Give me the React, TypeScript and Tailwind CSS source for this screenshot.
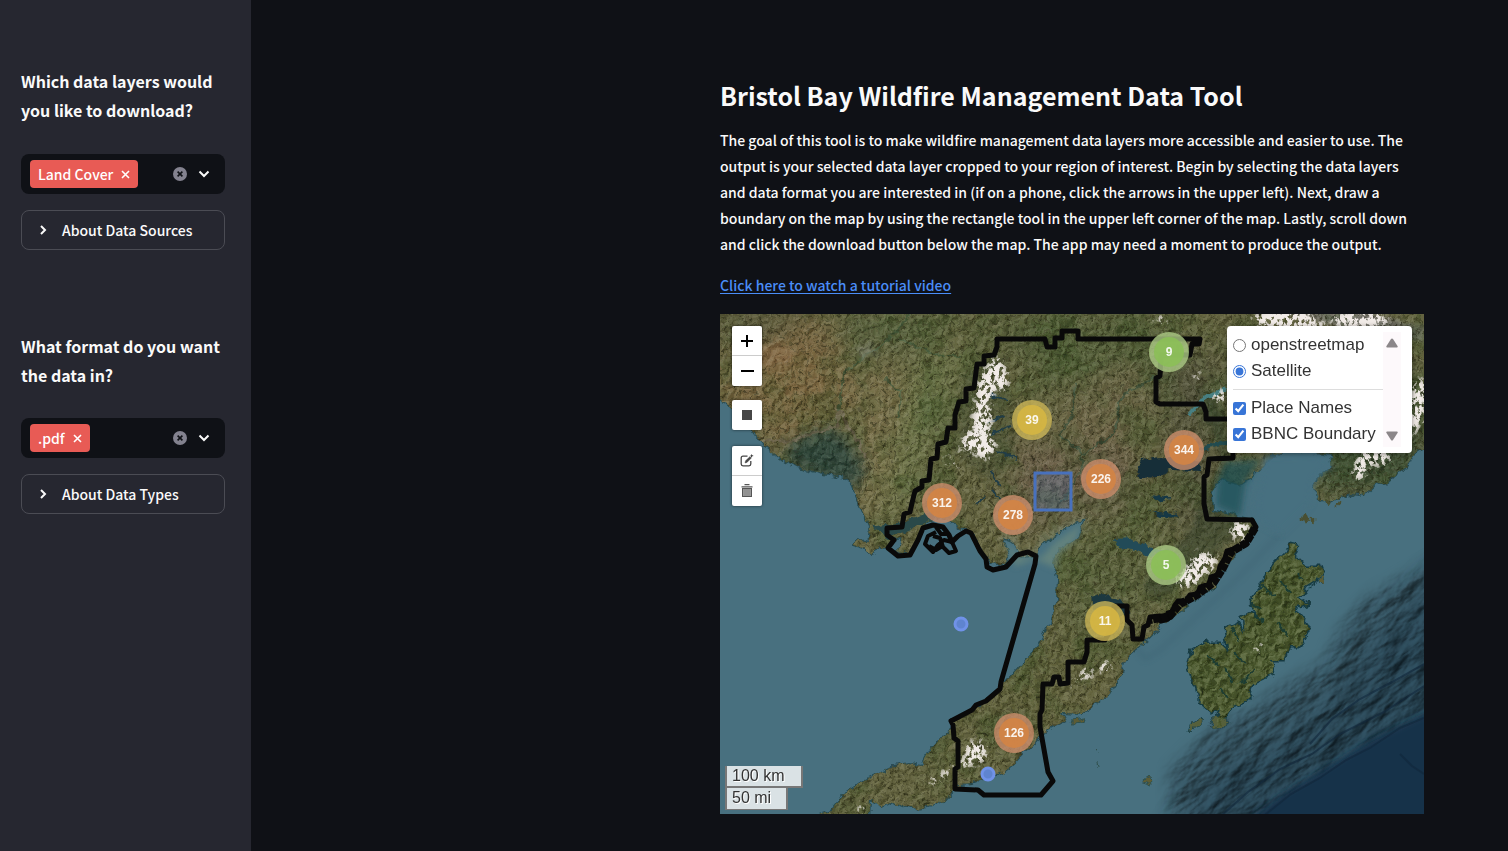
import React, { useState } from "react";

const BOUNDARY =
  "M277 25H325L327 33H335V24H342V17H358V25H480L479 30H472L470 41H441L440 62L436 64V88L440 90H483L486 98V105H513V144L489 145L487 161L484 163V190L487 205L532 206L536 213L530 222L525 231L514 235L507 237L505 244L500 252L498 261L491 263L489 270L480 273L478 280L470 281L466 287L458 287L455 291L452 298L448 299V305L441 307L440 302L430 303L428 311L424 313L422 325H413L412 311L407 306V292H394V310L385 326H367V338L364 348H348V369L340 370L339 363H334L332 370H323L322 396L320 400V413L328 458L333 467L321 481H264L258 476L235 475V455L238 453V427L234 424L233 411L231 407L252 396L256 391L266 387L280 375L281 368L315 250L316 242L308 238L297 241L286 253L273 256L267 253L266 245L260 237L251 219L246 217L238 222L232 228L229 221L223 213L213 211L203 214L198 226L190 241L178 242L168 234L174 226L167 221V214L182 213L184 200L190 198L192 189L195 177L202 173V167L209 166L211 145L217 144L218 130L226 128L228 114H235V101L239 88L246 87V75L254 74L257 50H264V42L274 41L277 33Z";

const LAND =
  "M-10 -10H714V126L696 138L684 156L676 160L667 168L655 171L648 178L640 181L630 180L618 184L607 189L597 183L594 172L600 162L612 155L610 141L580 137L560 139L545 148L530 165L518 170L500 166L492 178L493 196L534 206L534 217L526 229L514 241L505 254L494 272L470 289L445 308L430 323L411 339L404 351L399 365L390 378L375 390L360 400L342 399L346 407L328 416L316 427L301 442L291 452L281 459L263 465L251 470L239 471L225 485L208 492L191 495L173 488L161 494L151 485L150 510H72L111 497L124 480L144 466L173 453L188 450L202 452L211 435L221 424L233 415L232 407L253 395L266 387L280 374L300 352L319 331L331 308L337 285L338 263L332 246L340 236L358 224L365 204L351 211L331 222L315 240L300 243L292 227L282 223L289 240L284 252L271 249L262 237L251 219L240 214L230 206L216 202L203 211L196 232L186 240L178 236L182 224L173 226L164 232L150 239L145 234L132 230L135 227L147 228L149 214L141 195L133 174L125 164L100 159L80 154L64 147L45 132L30 113L14 96L-10 76Z";

const KODIAK =
  "M553 250L567 236L570 229L579 231L575 243L588 252L600 252L603 260L596 267L586 273L580 285L588 290L576 293L579 300L587 310L587 320L579 333L568 333L563 347L551 347L554 360L544 364L533 369L530 381L520 391L510 394L501 410L496 411L501 395L492 399L479 387L476 373L470 361L467 352L472 337L485 329L503 329L509 340L505 314L517 309L525 320L523 303L530 299L539 303L529 287L542 271L547 259Z";

const SNOW = [
  [268, 70, 12, 26, 20], [262, 104, 12, 22, 0], [264, 132, 14, 15, -20], [247, 128, 7, 14, 10], [280, 60, 9, 20, -15],
  [236, 147, 4, 9, 0], [226, 148, 3, 7, 0], [565, 5, 34, 13, 0], [585, 13, 24, 10, 0], [640, 6, 30, 12, 0], [697, 92, 11, 30, 10],
  [520, 216, 11, 12, 30], [484, 248, 15, 12, 0], [470, 262, 17, 12, -30], [642, 150, 9, 20, 15], [660, 143, 12, 11, 0],
  [384, 353, 9, 7, -20], [366, 360, 7, 8, 0], [356, 369, 5, 6, 0], [256, 438, 13, 13, 10], [248, 447, 11, 7, -30],
  [227, 458, 10, 5, -40], [215, 466, 8, 5, -30], [142, 495, 6, 6, 0], [440, 6, 9, 5, 0], [538, 334, 11, 4, -50], [477, 63, 4, 8, 0],
  [500, 82, 10, 8, 0],
];

const CLUSTERS = [
  { n: 9, x: 449, y: 38, size: "s" },
  { n: 39, x: 312, y: 106, size: "m" },
  { n: 344, x: 464, y: 136, size: "l" },
  { n: 226, x: 381, y: 165, size: "l" },
  { n: 278, x: 293, y: 201, size: "l" },
  { n: 312, x: 222, y: 189, size: "l" },
  { n: 5, x: 446, y: 251, size: "s" },
  { n: 11, x: 385, y: 307, size: "m" },
  { n: 126, x: 294, y: 419, size: "l" },
];

const OUTER: Record<string, string> = {
  s: "bg-[#adcb86]/80",
  m: "bg-[#c9b457]/80",
  l: "bg-[#cb8d6c]/80",
};
const INNER: Record<string, string> = {
  s: "bg-[#8bbf58]/90",
  m: "bg-[#d5b643]/90",
  l: "bg-[#d38445]/90",
};

function SatelliteImage() {
  return (
    <svg
      className="absolute inset-0 h-full w-full"
      viewBox="0 0 704 500"
      preserveAspectRatio="xMinYMin slice"
      aria-hidden="true"
    >
      <defs>
        <filter id="coast" x="-5%" y="-5%" width="110%" height="110%">
          <feTurbulence type="fractalNoise" baseFrequency="0.11" numOctaves="3" seed="4" />
          <feDisplacementMap in="SourceGraphic" scale="9" xChannelSelector="R" yChannelSelector="G" />
        </filter>
        <filter id="soft" x="-40%" y="-40%" width="180%" height="180%">
          <feGaussianBlur stdDeviation="14" />
        </filter>
        <filter id="soft3" x="-40%" y="-40%" width="180%" height="180%">
          <feGaussianBlur stdDeviation="3" />
        </filter>
        <filter id="soft7" x="-40%" y="-40%" width="180%" height="180%">
          <feGaussianBlur stdDeviation="7" />
        </filter>
        <filter id="relief" x="0" y="0" width="100%" height="100%" colorInterpolationFilters="sRGB">
          <feTurbulence type="fractalNoise" baseFrequency="0.15 0.12" numOctaves="4" seed="11" />
          <feColorMatrix values="0 0 0 0 0 0 0 0 0 0 0 0 0 0 0 1 0 0 0 0" />
          <feDiffuseLighting surfaceScale="2.2" lightingColor="#ffffff" diffuseConstant="0.8">
            <feDistantLight azimuth="225" elevation="42" />
          </feDiffuseLighting>
        </filter>
        <filter id="mottle" x="0" y="0" width="100%" height="100%" colorInterpolationFilters="sRGB">
          <feTurbulence type="fractalNoise" baseFrequency="0.025" numOctaves="5" seed="23" />
          <feColorMatrix values="0 0 0 0 0.22 0 0 0 0 0.31 0 0 0 0 0.14 4 0 0 0 -1.8" />
        </filter>
        <filter id="grain" x="0" y="0" width="100%" height="100%" colorInterpolationFilters="sRGB">
          <feTurbulence type="fractalNoise" baseFrequency="0.35" numOctaves="2" seed="31" />
          <feColorMatrix values="0 0 0 0 0.16 0 0 0 0 0.16 0 0 0 0 0.08 5 0 0 0 -2.6" />
        </filter>
        <filter id="seabed" x="0" y="0" width="100%" height="100%" colorInterpolationFilters="sRGB">
          <feTurbulence type="fractalNoise" baseFrequency="0.03 0.07" numOctaves="5" seed="8" />
          <feColorMatrix values="0 0 0 0 0 0 0 0 0 0 0 0 0 0 0 1 0 0 0 0" />
          <feDiffuseLighting surfaceScale="5" lightingColor="#55839a" diffuseConstant="0.7">
            <feDistantLight azimuth="240" elevation="42" />
          </feDiffuseLighting>
        </filter>
        <filter id="snow" x="0" y="0" width="704" height="500" filterUnits="userSpaceOnUse" colorInterpolationFilters="sRGB">
          <feGaussianBlur in="SourceAlpha" stdDeviation="3.5" result="a" />
          <feTurbulence type="fractalNoise" baseFrequency="0.24 0.18" numOctaves="4" seed="5" />
          <feColorMatrix values="0 0 0 0 0 0 0 0 0 0 0 0 0 0 0 1 0 0 0 0" result="n" />
          <feComposite in="a" in2="n" operator="arithmetic" k1="0" k2="0.5" k3="1.2" k4="-0.1" />
          <feComponentTransfer>
            <feFuncA type="linear" slope="6" intercept="-5" />
          </feComponentTransfer>
          <feComposite in2="a" operator="in" result="m" />
          <feFlood floodColor="#f1ebe7" />
          <feComposite in2="m" operator="in" />
        </filter>
        <clipPath id="landClip">
          <path d={LAND} />
        </clipPath>
        <clipPath id="kodiakClip">
          <path d={KODIAK} />
        </clipPath>
        <mask id="ridgeMask">
          <path
            d="M724 240L680 265L645 285L620 315L606 345L592 355L562 372L535 392L500 408L450 455V520H525L600 462L645 430L724 388Z"
            fill="#fff"
            filter="url(#soft7)"
          />
        </mask>
      </defs>

      <rect width="704" height="500" fill="#48707f" />
      <path d="M730 250L655 325L605 390L550 430L490 462L450 530H730Z" fill="#25485b" filter="url(#soft)" />
      <g mask="url(#ridgeMask)" opacity="0.6">
        <g transform="rotate(-34 560 400)">
          <rect x="330" y="220" width="520" height="360" filter="url(#seabed)" />
        </g>
      </g>
      <path d="M524 510L560 482L600 458L650 427L714 396V510Z" fill="#19324a" filter="url(#soft3)" />
      <path d="M540 505L571 480L600 464L626 446L650 434L680 414L704 404M500 503L528 478L560 455L592 440L620 420L664 398L704 372M590 430L612 405L640 385L672 368L704 350" fill="none" stroke="#10263a" strokeWidth="2" opacity="0.6" />
      <path d="M680 440L692 452L704 460" fill="none" stroke="#10263a" strokeWidth="2" opacity="0.6" />
      <path d="M400 310L425 345L440 336L520 262L560 220" fill="none" stroke="#35586a" strokeWidth="3" opacity="0.4" filter="url(#soft3)" />

      <g filter="url(#coast)">
        <path d={LAND} fill="#5a5a3a" stroke="#284a50" strokeWidth="2" />
      </g>
      <g filter="url(#coast)">
        <g clipPath="url(#landClip)">
          <rect x="-10" y="-10" width="724" height="520" fill="#63633f" />
          <g filter="url(#soft)">
            <path d="M0 0H110L130 60L118 110L60 130L0 90Z" fill="#7b6742" />
            <path d="M0 0H100L60 25L0 45Z" fill="#5c5a3d" />
            <path d="M110 0H230L190 40L110 35Z" fill="#5b6340" />
            <path d="M120 45L190 60L170 220L140 200Z" fill="#786e49" />
            <path d="M190 50L250 30L220 120L190 190L155 220Z" fill="#677044" />
            <path d="M260 0H440V90L330 80Z" fill="#525d38" />
            <path d="M335 85L430 45L420 130L350 150Z" fill="#6d6646" />
            <path d="M290 130L410 130L430 200L370 210L290 215Z" fill="#6c6149" />
            <path d="M440 40L500 40L500 200L460 230Z" fill="#57563d" />
            <path d="M345 205L450 180L440 290L340 330Z" fill="#5a613a" />
            <path d="M300 350L400 300L320 410L240 460Z" fill="#5f613b" />
            <path d="M590 80L704 60V180H590Z" fill="#3e4d32" />
          </g>
          <path d="M520 -4H640L704 14V26H640L615 12L560 -1Z" fill="#77746c" filter="url(#soft3)" />
          <rect width="704" height="500" filter="url(#mottle)" opacity="0.36" />
          <rect width="704" height="500" filter="url(#grain)" opacity="0.5" />
          <ellipse cx="54" cy="42" rx="20" ry="13" fill="#8a6d48" opacity="0.65" filter="url(#soft3)" />
          <path d="M70 127L112 113L125 123L138 140L147 152L133 178L100 165L65 148Z" fill="#203d38" opacity="0.75" filter="url(#soft7)" />
          <path d="M40 127L72 127L100 118L118 110L118 96L132 118L145 144" fill="none" stroke="#6e6551" strokeWidth="3" opacity="0.7" />
          <path d="M118 96L124 58L140 45L165 30L190 0M180 25L215 40L240 42M165 65L180 78L178 105" fill="none" stroke="#405638" strokeWidth="2" opacity="0.75" />
          <path d="M356 70L352 100L340 120L362 140L385 125L397 115L398 88L410 76L440 62M362 140L360 160L340 190" fill="none" stroke="#384d38" strokeWidth="2" opacity="0.75" />
          <path d="M135 32L152 30L156 40L142 45Z" fill="#808071" opacity="0.6" filter="url(#soft3)" />
          <path d="M365 204L351 211L331 222L315 240L300 243L292 227L282 223" fill="none" stroke="#87917b" strokeWidth="8" opacity="0.5" filter="url(#soft3)" />
          <rect width="704" height="500" filter="url(#relief)" opacity="0.7" className="mix-blend-soft-light" />
          <g filter="url(#soft3)" opacity="0.45">
            <path d="M475 70L505 150L470 215L420 275L440 285L520 220L500 90Z" fill="#2f3d2c" />
            <path d="M240 60L285 40L295 140L270 170L235 140Z" fill="#35442f" opacity="0.6" />
          </g>
          <path d="M416 160L422 146L440 143L482 147L480 157L450 156L437 163L420 164Z" fill="#142d38" />
          <path d="M432 183L440 180L450 184L440 187ZM430 197L440 198L455 200L458 203L440 201Z" fill="#193844" />
          <path d="M394 225L410 224L425 232L448 237L430 242L412 235L398 233Z" fill="#244c58" />
          <path d="M372 283L382 280L402 287L410 300L395 306L375 300Z" fill="#1b3941" />
          <path d="M267 80L286 86M268 108L286 103M272 119L292 112M278 137L296 145M272 157L281 172M255 190L266 183M272 174L280 187" fill="none" stroke="#203d46" strokeWidth="2" />
          <path d="M467 102L477 90L490 82L507 74" fill="none" stroke="#467f82" strokeWidth="4" />
          <path d="M460 140L492 132L510 128" fill="none" stroke="#244b50" strokeWidth="4" />
          <path d="M150 213L185 208L210 198L216 203L190 216L168 224Z" fill="#29494a" />
          <path d="M215 216L232 211L252 220L262 240L240 240Z" fill="#446c79" />
        </g>
      </g>

      <g filter="url(#soft3)">
        <path d="M285 226L300 243L322 243L335 228L354 215L362 208L356 226L337 242L338 255L315 245L295 252Z" fill="#69877d" opacity="0.8" />
        <path d="M505 148L542 145L525 170L520 203L496 192L498 165Z" fill="#1e5056" opacity="0.7" />
        <path d="M545 142L600 141L612 152L594 165L590 190L560 220L542 210L535 190L540 168Z" fill="#476f80" />
      </g>

      <g filter="url(#coast)">
        <path d={KODIAK} fill="#46512d" stroke="#173b42" strokeWidth="3" />
        <path d="M494 404L506 403L509 409L498 413L488 413ZM468 420L472 408L481 403L485 407L474 414Z" fill="#57603a" stroke="#23454a" />
        <path d="M352 407L366 405L367 408L354 410ZM424 465L431 461L432 472L423 469ZM376 435L378 441M379 448L380 454M601 262L604 264L603 272L599 268Z" fill="#5b5b36" stroke="#30504d" />
        <path d="M578 205L585 202L587 207M590 205L596 208M603 186L610 190M617 189L620 190" fill="none" stroke="#4a5030" strokeWidth="3" />
        <g clipPath="url(#kodiakClip)">
          <rect x="460" y="220" width="150" height="200" fill="#48552c" />
          <rect x="460" y="220" width="150" height="200" filter="url(#relief)" className="mix-blend-soft-light" />
          <path d="M511 313L519 328M530 299L544 307M542 271L556 283M487 340L500 352M505 355L513 368M529 288L541 296M560 265L570 277M520 370L534 357M515 340L526 350M500 375L508 385M575 260L584 266M558 310L568 322" fill="none" stroke="#1e3c32" strokeWidth="2" />
        </g>
      </g>

      <g filter="url(#snow)">
        {SNOW.map(([x, y, rx, ry, r], i) => (
          <ellipse key={i} cx={x} cy={y} rx={rx} ry={ry} transform={`rotate(${r} ${x} ${y})`} />
        ))}
      </g>
    </svg>
  );
}

function BoundaryLayer() {
  return (
    <svg
      className="absolute inset-0 h-full w-full"
      viewBox="0 0 704 500"
      preserveAspectRatio="xMinYMin slice"
      aria-hidden="true"
    >
      <g fill="none" stroke="#090909" strokeWidth="5" strokeLinejoin="round">
        <path d={BOUNDARY} />
        <path d="M216 218L208 222L205 230L213 238L218 231L224 226L232 228L236 237L229 239L223 233L220 224L213 222M209 232L216 236L224 231M216 213L221 220L228 220" strokeWidth="4" />
        <path d="M535 214L526 229L511 238L503 254L494 268L477 281L460 290L450 302L430 306" strokeWidth="8" strokeDasharray="7 1" />
      </g>
      <rect x="315" y="159" width="36" height="37" fill="#5076c8" fillOpacity="0.22" stroke="#4871bd" strokeWidth="3" />
      {[[241, 310], [268, 460]].map(([x, y]) => (
        <circle key={x} cx={x} cy={y} r="6" fill="#5f84cf" stroke="#7092e8" strokeWidth="3" />
      ))}
    </svg>
  );
}

const barClass = "overflow-hidden rounded-[2px] bg-white shadow-[0_0_3px_rgba(0,0,0,0.6)]";
const barButton = "flex h-[30px] w-[30px] items-center justify-center text-[#000]";

function MapControls() {
  return (
    <div className="absolute top-3 left-3 flex flex-col">
      <div className={barClass}>
        <button type="button" aria-label="Zoom in" className={`${barButton} border-b border-[#ccc]`}>
          <svg width="14" height="14" viewBox="0 0 14 14" stroke="currentColor" strokeWidth="2">
            <path d="M7 1V13M1 7H13" />
          </svg>
        </button>
        <button type="button" aria-label="Zoom out" className={barButton}>
          <svg width="14" height="14" viewBox="0 0 14 14" stroke="currentColor" strokeWidth="2">
            <path d="M1 7H14" />
          </svg>
        </button>
      </div>
      <div className={`${barClass} mt-[14px]`}>
        <button type="button" aria-label="Draw a rectangle" className={barButton}>
          <span className="h-[10px] w-[10px] bg-[#464646]" />
        </button>
      </div>
      <div className={`${barClass} mt-4`}>
        <button type="button" aria-label="Edit layers" className={`${barButton} border-b border-[#ccc]`}>
          <svg width="14" height="14" viewBox="0 0 14 14" fill="none" stroke="#464646">
            <path d="M7.5 2.2H3Q1.2 2.2 1.2 4V10Q1.2 11.8 3 11.8H9Q10.8 11.8 10.8 10V7" strokeWidth="1.3" />
            <path d="M5 9L5.5 6.8L10 2.6L11.4 4L7 8.4Z" fill="#464646" strokeWidth="0.4" />
            <path d="M11.5 0.5V3.3M10.5 1.8H13.2" strokeWidth="1.1" />
          </svg>
        </button>
        <button type="button" aria-label="Delete layers" className={barButton}>
          <svg width="12" height="14" viewBox="0 0 12 14" fill="none" stroke="#555">
            <path d="M3.5 0.7H8.5M0.5 2.8H11.5" strokeWidth="1.3" />
            <rect x="1.5" y="4.5" width="9" height="8" fill="#999" />
            <path d="M4 5V12M6 5V12M8 5V12" stroke="#888" strokeWidth="0.7" />
          </svg>
        </button>
      </div>
    </div>
  );
}

function LayersPanel() {
  const [base, setBase] = useState("Satellite");
  const row = "flex h-[26px] items-center gap-[5px]";
  return (
    <div className="absolute top-3 right-3 flex rounded-[4px] bg-white py-[6px] pr-[11px] pl-[6px] text-[17px] text-[#333] shadow-[0_1px_5px_rgba(0,0,0,0.4)]">
      <div className="w-[150px] whitespace-nowrap">
        {["openstreetmap", "Satellite"].map((name) => (
          <label key={name} className={row}>
            <input
              type="radio"
              name="base"
              checked={base === name}
              onChange={() => setBase(name)}
              className="m-0 h-[13px] w-[13px] accent-[#3875d7]"
            />
            {name}
          </label>
        ))}
        <div className="my-[5px] h-px bg-[#ddd]" />
        {["Place Names", "BBNC Boundary"].map((name) => (
          <label key={name} className={row}>
            <input type="checkbox" defaultChecked className="m-0 h-[13px] w-[13px] accent-[#3875d7]" />
            {name}
          </label>
        ))}
      </div>
      <div className="flex w-[18px] flex-col items-center justify-between bg-[#fdf9fb] py-[6px]">
        <svg width="12" height="10" viewBox="0 0 12 10" fill="#8b8789">
          <path d="M6 0.5Q6.6 0.5 7 1L11.5 8Q12.2 9.5 10.8 9.5H1.2Q-0.2 9.5 0.5 8L5 1Q5.4 0.5 6 0.5Z" />
        </svg>
        <svg width="12" height="10" viewBox="0 0 12 10" fill="#8b8789">
          <path d="M6 9.5Q6.6 9.5 7 9L11.5 2Q12.2 0.5 10.8 0.5H1.2Q-0.2 0.5 0.5 2L5 9Q5.4 9.5 6 9.5Z" />
        </svg>
      </div>
    </div>
  );
}

function WildfireMap() {
  return (
    <section
      aria-label="Map"
      className="relative h-[500px] w-full overflow-hidden bg-[#48707f] font-['Liberation_Sans',Arial,sans-serif] font-normal"
    >
      <SatelliteImage />
      <BoundaryLayer />
      {CLUSTERS.map((c) => (
        <button
          key={c.n}
          type="button"
          style={{ left: c.x, top: c.y }}
          className={`absolute flex h-10 w-10 -translate-x-1/2 -translate-y-1/2 items-center justify-center rounded-full ${OUTER[c.size]}`}
        >
          <span
            className={`flex h-[30px] w-[30px] items-center justify-center rounded-full text-[12px] font-bold text-white/90 ${INNER[c.size]}`}
          >
            {c.n}
          </span>
        </button>
      ))}
      <MapControls />
      <LayersPanel />
      <div className="absolute bottom-1 left-[5px] flex flex-col items-start text-[16px] leading-[20px] text-[#333] [text-shadow:1px_1px_#fff]">
        <div className="h-[22px] w-[78px] border-2 border-t-0 border-[#777] bg-white/80 pl-[5px]">100 km</div>
        <div className="h-[22px] w-[63px] border-x-2 border-b border-[#777] bg-white/80 pl-[5px]">50 mi</div>
      </div>
    </section>
  );
}

function MultiSelect({ id, value }: { id: string; value: string }) {
  return (
    <div className="flex h-10 items-center rounded-lg bg-[#0f1116] pr-[13px] pl-[9px]">
      <span className="flex h-7 shrink-0 items-center gap-2 rounded-[4px] bg-[#e85b55] px-2 text-[14px] text-white">
        {value}
        <button type="button" aria-label={`Remove ${value}`}>
          <svg width="9" height="9" viewBox="0 0 9 9" stroke="currentColor" strokeWidth="1.6">
            <path d="M1 1L8 8M8 1L1 8" />
          </svg>
        </button>
      </span>
      <input id={id} className="min-w-0 flex-1 bg-transparent outline-none" />
      <button type="button" aria-label="Clear all" className="mr-[9px]">
        <svg width="14" height="14" viewBox="0 0 14 14">
          <circle cx="7" cy="7" r="7" fill="#83828f" />
          <path d="M4.6 4.6L9.4 9.4M9.4 4.6L4.6 9.4" stroke="#0f1116" strokeWidth="1.6" />
        </svg>
      </button>
      <button type="button" aria-label="Open options">
        <svg width="16" height="16" viewBox="0 0 16 16" fill="none" stroke="#fafafa" strokeWidth="2">
          <path d="M3.5 5.5L8 10L12.5 5.5" />
        </svg>
      </button>
    </div>
  );
}

function Expander({ title }: { title: string }) {
  return (
    <details className="mt-4 rounded-lg border border-[#4b4c54]">
      <summary className="flex h-[38px] cursor-pointer list-none items-center gap-3 pl-[14px] text-[14px] text-[#fafafa]">
        <svg width="14" height="14" viewBox="0 0 14 14" fill="none" stroke="currentColor" strokeWidth="2">
          <path d="M5 3L9 7L5 11" />
        </svg>
        {title}
      </summary>
    </details>
  );
}

export default function App() {
  const heading = "block text-[16px] leading-[29px] font-bold text-[#fafafa]";
  return (
    <div className="flex min-h-screen bg-[#0f1116] font-['Noto_Sans_CJK_SC',sans-serif] font-medium text-[#fafafa]">
      <aside className="w-[251px] shrink-0 bg-[#262730] pt-[67px] pr-[26px] pl-[21px]">
        <label htmlFor="layers" className={`${heading} mb-[29px]`}>
          Which data layers would you like to download?
        </label>
        <MultiSelect id="layers" value="Land Cover" />
        <Expander title="About Data Sources" />
        <label htmlFor="format" className={`${heading} mt-[82px] mb-[28px]`}>
          What format do you want the data in?
        </label>
        <MultiSelect id="format" value=".pdf" />
        <Expander title="About Data Types" />
      </aside>
      <main className="flex flex-1 justify-end pt-[77px] pr-[84px] pb-[37px] pl-8">
        <div className="w-full max-w-[704px]">
          <h1 className="text-[25px] leading-[36px] font-bold">Bristol Bay Wildfire Management Data Tool</h1>
          <p className="mt-[14px] pr-2 text-[14px] leading-[26px]">
            The goal of this tool is to make wildfire management data layers more accessible and easier to use. The
            output is your selected data layer cropped to your region of interest. Begin by selecting the data layers
            and data format you are interested in (if on a phone, click the arrows in the upper left). Next, draw a
            boundary on the map by using the rectangle tool in the upper left corner of the map. Lastly, scroll down
            and click the download button below the map. The app may need a moment to produce the output.
          </p>
          <p className="mt-[15px] mb-4 text-[14px] leading-[26px]">
            <a href="#tutorial" className="text-[#4a8df8] underline underline-offset-2">
              Click here to watch a tutorial video
            </a>
          </p>
          <WildfireMap />
        </div>
      </main>
    </div>
  );
}
